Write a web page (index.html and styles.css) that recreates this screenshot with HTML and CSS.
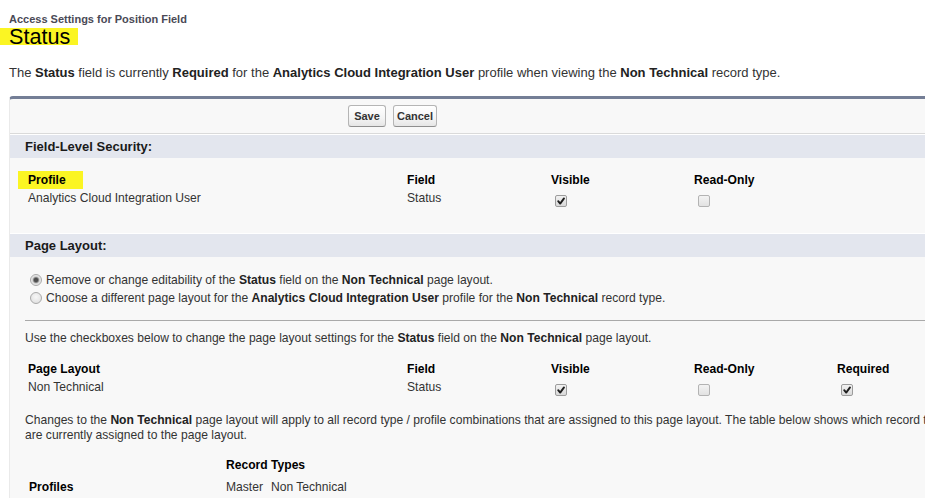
FILE: index.html
```html
<!DOCTYPE html>
<html>
<head>
<meta charset="utf-8">
<title>Access Settings for Position Field</title>
<link rel="stylesheet" href="styles.css">
</head>
<body>
<div class="page">
  <div class="page-type">Access Settings for Position Field</div>
  <h1 class="page-title"><span class="hl-title">Status</span></h1>
  <p class="intro">The <b>Status</b> field is currently <b>Required</b> for the <b>Analytics Cloud Integration User</b> profile when viewing the <b>Non Technical</b> record type.</p>

  <div class="block">
    <div class="btn-row">
      <button class="btn btn-save">Save</button>
      <button class="btn btn-cancel">Cancel</button>
    </div>

    <h3 class="subheader">Field-Level Security:</h3>
    <div class="grid fls">
      <div class="th"><span class="hl-profile">Profile</span></div>
      <div class="th">Field</div>
      <div class="th">Visible</div>
      <div class="th">Read-Only</div>
      <div></div>
      <div class="td">Analytics Cloud Integration User</div>
      <div class="td">Status</div>
      <div class="cb-cell"><span class="cb on"><svg viewBox="0 0 10 10" width="10" height="10"><path d="M2.2 5.2 L4.2 7.6 L8 2.4" fill="none" stroke="#1e1e1e" stroke-width="1.9" stroke-linecap="round" stroke-linejoin="round"/></svg></span></div>
      <div class="cb-cell"><span class="cb off"></span></div>
      <div></div>
    </div>

    <h3 class="subheader second">Page Layout:</h3>
    <div class="radios">
      <div class="radio-row"><span class="radio on"></span><span>Remove or change editability of the <b>Status</b> field on the <b>Non Technical</b> page layout.</span></div>
      <div class="radio-row"><span class="radio"></span><span>Choose a different page layout for the <b>Analytics Cloud Integration User</b> profile for the <b>Non Technical</b> record type.</span></div>
    </div>
    <div class="rule"></div>
    <p class="note">Use the checkboxes below to change the page layout settings for the <b>Status</b> field on the <b>Non Technical</b> page layout.</p>

    <div class="grid pl">
      <div class="th">Page Layout</div>
      <div class="th">Field</div>
      <div class="th">Visible</div>
      <div class="th">Read-Only</div>
      <div class="th">Required</div>
      <div class="td">Non Technical</div>
      <div class="td">Status</div>
      <div class="cb-cell"><span class="cb on"><svg viewBox="0 0 10 10" width="10" height="10"><path d="M2.2 5.2 L4.2 7.6 L8 2.4" fill="none" stroke="#1e1e1e" stroke-width="1.9" stroke-linecap="round" stroke-linejoin="round"/></svg></span></div>
      <div class="cb-cell"><span class="cb off"></span></div>
      <div class="cb-cell"><span class="cb on"><svg viewBox="0 0 10 10" width="10" height="10"><path d="M2.2 5.2 L4.2 7.6 L8 2.4" fill="none" stroke="#1e1e1e" stroke-width="1.9" stroke-linecap="round" stroke-linejoin="round"/></svg></span></div>
    </div>

    <p class="changes">Changes to the <b>Non Technical</b> page layout will apply to all record type / profile combinations that are assigned to this page layout. The table below shows which record types and profiles<br>are currently assigned to the page layout.</p>

    <div class="rt">
      <div></div>
      <div class="th">Record Types</div>
      <div class="th">Profiles</div>
      <div class="td"><span class="rt-name">Master</span><span>Non Technical</span></div>
    </div>
  </div>
</div>
</body>
</html>
```

FILE: styles.css
```css
* { box-sizing: border-box; }
html, body {
  margin: 0;
  padding: 0;
  background: #ffffff;
  overflow: hidden;
}
body {
  font-family: "Liberation Sans", Arial, sans-serif;
  font-size: 12.1px;
  color: #333333;
  width: 925px;
  height: 498px;
}
b { color: #222222; }

.page {
  padding: 13px 0 0 9px;
  width: 1160px;
}
.page-type {
  font-size: 11px;
  font-weight: bold;
  color: #4a4a56;
  line-height: 12px;
}
.page-title {
  margin: 0 0 0 -9px;
  font-size: 21.6px;
  font-weight: normal;
  line-height: 24px;
  color: #000000;
}
.hl-title {
  display: inline-block;
  padding: 0 8px 0 9px;
  background: linear-gradient(#fbf523, #fbf523) no-repeat 0 3px / 100% 17px;
}
.intro {
  margin: 16px 0 0;
  font-size: 13px;
  line-height: 15px;
}

.block {
  margin-top: 16px;
  width: 1140px;
  background: #f8f8f8;
  border: 1px solid #eaeaea;
  border-top: 3px solid #747e96;
  border-radius: 4px 4px 0 0;
  padding-bottom: 20px;
}
.btn-row {
  display: flex;
  gap: 7px;
  padding: 6px 0 6px 338px;
  border-bottom: 1px solid #dadada;
}
.btn {
  height: 22px;
  padding: 0;
  font-family: "Liberation Sans", Arial, sans-serif;
  font-size: 11px;
  font-weight: bold;
  color: #333333;
  border: 1px solid #b5b5b5;
  border-bottom-color: #8f8f8f;
  border-radius: 3px;
  background: linear-gradient(#ffffff, #f4f4f4 60%, #e6e6e6);
}
.btn-save { width: 38px; }
.btn-cancel { width: 44px; }

.subheader {
  margin: 0;
  height: 24px;
  border-top: 1px solid #ffffff;
  background: #e3e6ee;
  padding-left: 15px;
  font-size: 13px;
  font-weight: bold;
  line-height: 23px;
  color: #1a1a1a;
}
.subheader.second { margin-top: 26px; }

.grid {
  display: grid;
  grid-template-columns: 379px 144px 143px 143px 143px;
  margin-left: 18px;
  line-height: 18px;
}
.fls { margin-top: 13px; }
.pl { margin-top: 14px; }
.th {
  font-weight: bold;
  color: #000000;
}
.td { color: #333333; }
.hl-profile {
  display: inline-block;
  margin-left: -10px;
  padding: 0 17px 0 10px;
  background: #fbf523;
}
.cb-cell {
  padding: 6px 0 0 4px;
}
.cb {
  display: flex;
  align-items: center;
  justify-content: center;
  width: 12px;
  height: 12px;
  border: 1px solid #9c9c9c;
  border-radius: 2px;
  background: linear-gradient(#f2f2f2, #d9d9d9);
}
.cb.off {
  border-color: #b3b3b3;
  background: linear-gradient(#f3f3f3, #e2e2e2);
}

.radios {
  padding: 14px 0 0 20px;
}
.radio-row {
  display: flex;
  align-items: flex-start;
  line-height: 18px;
}
.radio {
  flex: none;
  width: 12px;
  height: 12px;
  margin: 3px 4px 0 0;
  border-radius: 50%;
  border: 1px solid #a9a9a9;
  background: radial-gradient(circle at 50% 40%, #f7f7f7, #dcdcdc);
}
.radio.on {
  background: radial-gradient(circle at 50% 50%, #4e4e4e 0, #4e4e4e 1.8px, #9a9a9a 2.8px, #d6d6d6 3.6px, #ececec 5px);
}
.rule {
  margin: 13px 0 0 15px;
  border-top: 1px solid #a9a9a9;
}
.note {
  margin: 10px 0 0 15px;
  line-height: 15px;
}
.changes {
  margin: 17px 0 0 15px;
  line-height: 15px;
}
.rt {
  display: grid;
  grid-template-columns: 197px auto;
  row-gap: 4px;
  margin: 13px 0 0 19px;
  line-height: 18px;
}
.rt-name { margin-right: 8px; }
```
